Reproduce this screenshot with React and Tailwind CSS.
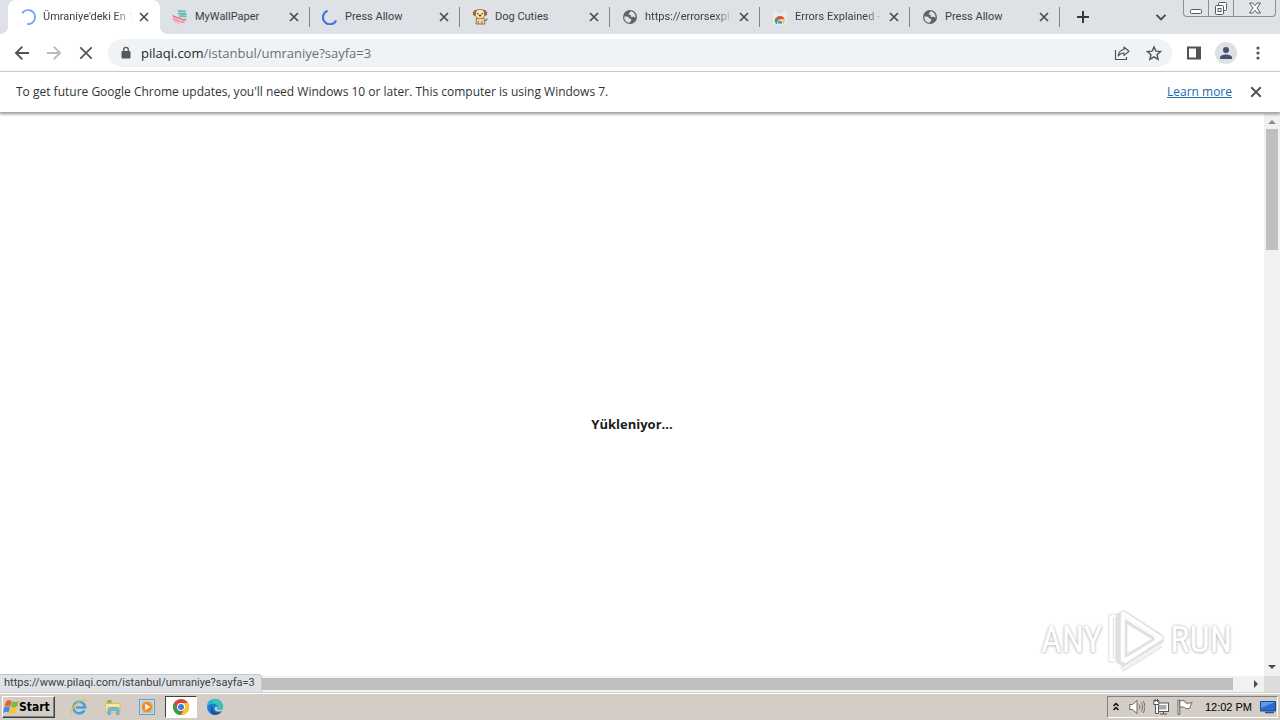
import React from "react";

function Spinner({ color = "#6f9ff0", strong = false }) {
  return (
    <svg viewBox="0 0 16 16" className="size-4 shrink-0" fill="none" aria-hidden="true">
      {strong ? (
        <path d="M5.6 1.7A7 7 0 1 0 14.2 11.5" stroke={color} strokeWidth="2.2" />
      ) : (
        <path d="M2.200 4.200A7 7 0 1 1 7.200 15" stroke={color} strokeWidth="1.800" />
      )}
    </svg>
  );
}

function WallpaperIcon() {
  return (
    <svg viewBox="0 0 16 16" className="size-4 shrink-0" fill="none" aria-hidden="true">
      <path d="M6 2.5c3-1.5 4 1 7.5-.7M6 5c3-1.5 5 1.200 8.500-.6M7.500 7.300c3-1 4 1 7-.4" stroke="#5fc0b8" strokeWidth="1.900" />
      <path d="M.8 6.500c2.500 3.500 6 1 8.500 3.500 1.500 1.300 3 1 5 .2" stroke="#f0697f" strokeWidth="1.500" />
      <path d="M1 9.500c2.500 2.700 5.500.8 7.500 3 1.200 1 2.500.8 4 .3" stroke="#f48a98" strokeWidth="1.500" />
      <path d="M2.500 12.500c2-.2 3.500.4 5 2.300" stroke="#f6a8b0" strokeWidth="1.400" />
    </svg>
  );
}

function DogIcon() {
  return (
    <svg viewBox="0 0 16 16" className="size-4 shrink-0" aria-hidden="true">
      <path d="M4.500 9h7.500l1 6H4z" fill="#f3dca8" stroke="#7d5a2e" strokeWidth=".8" />
      <path d="M4 1.500c2-1.300 6-1.300 8 0 1.500 1.500 1 5.500-.5 7-2 1.500-5 1.500-7 0C3 7 2.500 3 4 1.500z" fill="#fbe9bd" stroke="#8a6534" strokeWidth=".8" />
      <path d="M4.300 1.300C2 1.200.8 3 1.300 5.800l1.700.6zM11.700 1.300c2.300-.1 3.500 1.700 3 4.500l-1.700.6z" fill="#a9773c" stroke="#6d4a22" strokeWidth=".6" />
      <circle cx="6" cy="4.800" r=".8" fill="#3b2a1a" />
      <circle cx="10" cy="4.800" r=".8" fill="#3b2a1a" />
      <ellipse cx="8" cy="6.600" rx="1.300" ry=".9" fill="#3b2a1a" />
      <path d="M6.300 11.500V15M10 11.500V15" stroke="#7d5a2e" strokeWidth=".8" />
      <path d="M13 11.500c1.500 0 2-1 1.800-2" fill="none" stroke="#8a6534" strokeWidth="1.200" />
    </svg>
  );
}

function GlobeIcon() {
  return (
    <svg viewBox="0 0 16 16" className="size-4 shrink-0" aria-hidden="true">
      <circle cx="8" cy="8" r="7" fill="#5f6368" />
      <path d="M2.300 7.600c2.300-.4 4 .1 4.600 1.200.4.800 1.300.8 2 1.200.9.600.4 1.500-.3 2.200-.4.500-.7 1-.8 1.500C5 13.800 2.700 11.600 2.300 9.200z" fill="#dee1e6" />
      <path d="M8.800 2.300c-1 .8-.7 1.500-1.700 2-.9.500-.5 1.400.6 1.400 1 0 1.300.6 1 1.300-.3.900.9 1.300 1.800 1 .9-.4 2.200 0 2.800 1.300C14.200 6.300 12.300 2.900 8.800 2.300z" fill="#dee1e6" />
    </svg>
  );
}

function WebStoreIcon() {
  return (
    <svg viewBox="0 0 16 16" className="size-4 shrink-0" aria-hidden="true">
      <path d="M1 2h14v12a1 1 0 0 1-1 1H2a1 1 0 0 1-1-1z" fill="#e8eaee" />
      <path d="M5.500 2.800h5" stroke="#d0d3d8" strokeWidth="1" />
      <path d="M3.400 10A5 5 0 0 1 12.600 10L8 10.500z" fill="#df4a3e" />
      <path d="M3.400 9.200A5 5 0 0 0 4.300 15h2.500L8 11z" fill="#3da757" />
      <path d="M8.500 15h3.200a5 5 0 0 0 .9-5H8z" fill="#f9cd3b" />
      <path d="M5.600 15a2.600 2.600 0 1 1 4.800 0z" fill="#4a8af4" stroke="#fff" strokeWidth=".7" />
    </svg>
  );
}

function Cross({ className, width = 1.8 }) {
  return (
    <svg viewBox="0 0 10 10" className={className} fill="none" stroke="currentColor" strokeWidth={width} aria-hidden="true">
      <path d="M1 1l8 8M9 1L1 9" />
    </svg>
  );
}

const tabs = [
  { title: "Ümraniye'deki En 1", icon: <Spinner />, active: true, fade: true },
  { title: "MyWallPaper", icon: <WallpaperIcon /> },
  { title: "Press Allow", icon: <Spinner color="#3f76d8" strong /> },
  { title: "Dog Cuties", icon: <DogIcon /> },
  { title: "https://errorsexpl", icon: <GlobeIcon />, fade: true },
  { title: "Errors Explained -", icon: <WebStoreIcon />, fade: true },
  { title: "Press Allow", icon: <GlobeIcon /> },
];

function Tab({ tab }) {
  return (
    <div
      className={
        "relative flex h-full min-w-0 items-center pl-3 pr-[11px] " +
        (tab.active ? "w-[152px] rounded-t-lg bg-white" : "w-[150px]")
      }
    >
      {tab.active && (
        <>
          <span className="absolute bottom-0 -left-2 size-2 bg-[radial-gradient(circle_at_0_0,#dee1e6_8px,white_8px)]" />
          <span className="absolute bottom-0 -right-2 size-2 bg-[radial-gradient(circle_at_100%_0,#dee1e6_8px,white_8px)]" />
        </>
      )}
      {tab.icon}
      <button
        type="button"
        className={
          "ml-[7px] min-w-0 flex-1 overflow-hidden whitespace-nowrap text-left font-[Roboto,sans-serif] text-[11px] leading-4 text-[#3c4043] " +
          (tab.fade ? "mask-r-from-80%" : "")
        }
      >
        {tab.title}
      </button>
      <button type="button" aria-label={"Close " + tab.title} className="ml-1.5 text-[#45494d]">
        <Cross className="size-2.5" width={1.6} />
      </button>
      {!tab.active && <span className="absolute right-0 h-5 w-px bg-[#80848a]" />}
    </div>
  );
}

function TabStrip() {
  return (
    <header className="flex h-[34px] items-center bg-[#dee1e6] pl-2">
      <nav aria-label="Tabs" className="flex h-full min-w-0">
        {tabs.map((tab, i) => (
          <Tab key={i} tab={tab} />
        ))}
      </nav>
      <button type="button" aria-label="New tab" className="ml-4 text-[#35383c]">
        <svg viewBox="0 0 14 14" className="size-3.5" stroke="currentColor" strokeWidth="2" aria-hidden="true">
          <path d="M7 1v12M1 7h12" />
        </svg>
      </button>
      <div className="ml-auto flex h-full items-center">
        <button type="button" aria-label="Search tabs" className="mr-4 text-[#45494d]">
          <svg viewBox="0 0 12 12" className="size-3" fill="none" stroke="currentColor" strokeWidth="1.900" aria-hidden="true">
            <path d="M1.500 3.800L6 8.300l4.500-4.500" />
          </svg>
        </button>
        <div className="mr-1 flex h-[17px] self-start rounded-b-[4px] border border-t-0 border-[#8b8f96] bg-[#e0e3e8] text-[#555a62]">
          <button type="button" aria-label="Minimize" className="flex w-[25px] items-center justify-center border-r border-[#8b8f96]">
            <svg viewBox="0 0 14 14" className="size-3.5" aria-hidden="true">
              <rect x="1.500" y="8.500" width="11" height="4" rx="1" fill="#fff" stroke="currentColor" />
            </svg>
          </button>
          <button type="button" aria-label="Restore" className="flex w-[25px] items-center justify-center border-r border-[#8b8f96]">
            <svg viewBox="0 0 14 14" className="size-3.5" fill="#fff" stroke="currentColor" aria-hidden="true">
              <rect x="4.500" y="1.500" width="8" height="8" rx="1" />
              <rect x="1.500" y="4.500" width="8" height="9" rx="1" />
              <rect x="4" y="7.500" width="3" height="3" />
            </svg>
          </button>
          <button type="button" aria-label="Close window" className="flex w-[41px] items-center justify-center">
            <svg viewBox="0 0 14 14" className="size-3.5" fill="#fff" stroke="currentColor" aria-hidden="true">
              <path d="M1.500 2h3.300L7 4.700 9.200 2h3.300L9 7l3.500 5H9.200L7 9.300 4.800 12H1.500L5 7z" />
            </svg>
          </button>
        </div>
      </div>
    </header>
  );
}

function Toolbar() {
  return (
    <div className="flex h-[38px] items-center border-b border-[#d9dbde] bg-white px-3.5 text-[#505458]">
      <button type="button" aria-label="Back">
        <svg viewBox="0 0 16 16" className="size-4" fill="none" stroke="currentColor" strokeWidth="1.900" aria-hidden="true">
          <path d="M15 8H2.500M8.300 1.700L2 8l6.300 6.300" />
        </svg>
      </button>
      <button type="button" aria-label="Forward" className="ml-4 text-[#b9bbbe]">
        <svg viewBox="0 0 16 16" className="size-4" fill="none" stroke="currentColor" strokeWidth="1.900" aria-hidden="true">
          <path d="M1 8h12.500M7.700 1.700L14 8l-6.300 6.300" />
        </svg>
      </button>
      <button type="button" aria-label="Stop loading" className="ml-4">
        <svg viewBox="0 0 16 16" className="size-4" fill="none" stroke="currentColor" strokeWidth="1.700" aria-hidden="true">
          <path d="M2.300 2.300l11.400 11.400M13.700 2.300L2.300 13.700" />
        </svg>
      </button>
      <div className="ml-3.5 flex h-7 min-w-0 flex-1 items-center rounded-full bg-[#eff3f6] pl-3 pr-2.5">
        <svg viewBox="0 0 12 14" className="h-3.5 w-3 shrink-0" aria-hidden="true">
          <rect x="1.500" y="5" width="9" height="7.500" rx="1" fill="#54585d" />
          <path d="M3.700 5.500V3.700a2.300 2.300 0 0 1 4.600 0v1.800" fill="none" stroke="#54585d" strokeWidth="1.400" />
        </svg>
        <a href="#address" className="ml-[9px] min-w-0 flex-1 truncate text-[13px] leading-5 text-[#6b7075]">
          <span className="text-[#24272a]">pilaqi.com</span>/istanbul/umraniye?sayfa=3
        </a>
        <button type="button" aria-label="Share">
          <svg viewBox="0 0 16 16" className="size-4" fill="none" stroke="currentColor" strokeWidth="1.200" aria-hidden="true">
            <path d="M1.500 5v9.500h11V12" />
            <path d="M10 2l5 4.200-5 4.200V8C7.300 8 5.600 8.800 4.200 11c.3-3.300 2.300-6 5.800-6.500z" strokeLinejoin="round" />
          </svg>
        </button>
        <button type="button" aria-label="Bookmark" className="ml-4">
          <svg viewBox="0 0 16 16" className="size-4" fill="none" stroke="currentColor" strokeWidth="1.400" aria-hidden="true">
            <path d="M8 1.900l1.900 4.300 4.600.4-3.500 3.100 1.100 4.600L8 11.800l-4.100 2.500L5 9.700 1.500 6.600l4.600-.4z" />
          </svg>
        </button>
      </div>
      <div className="ml-3.5 flex items-center gap-[13px]">
        <button type="button" aria-label="Side panel">
          <svg viewBox="0 0 16 16" className="size-4" aria-hidden="true">
            <path d="M1 1.500h14v13H1zM3 3.500v9h7v-9z" fill="currentColor" fillRule="evenodd" />
          </svg>
        </button>
        <button type="button" aria-label="Profile" className="flex size-[22px] items-center justify-center rounded-full bg-[#dde0e5] text-[#47516b]">
          <svg viewBox="0 0 14 14" className="size-3.5" fill="currentColor" aria-hidden="true">
            <circle cx="7" cy="4" r="3" />
            <path d="M1 13v-1.500C1 9.300 4.500 8.400 7 8.400s6 .9 6 3.100V13z" />
          </svg>
        </button>
        <button type="button" aria-label="Menu">
          <svg viewBox="0 0 16 16" className="size-4" fill="currentColor" aria-hidden="true">
            <circle cx="8" cy="3" r="1.600" />
            <circle cx="8" cy="8" r="1.600" />
            <circle cx="8" cy="13" r="1.600" />
          </svg>
        </button>
      </div>
    </div>
  );
}

function InfoBar() {
  return (
    <div className="relative z-10 flex h-[41px] items-center border-b border-[#a9abad] bg-white px-4 text-xs text-[#303336] shadow-[0_1px_3px_#00000070]">
      <p className="min-w-0 flex-1 truncate">
        To get future Google Chrome updates, you'll need Windows 10 or later. This computer is using Windows 7.
      </p>
      <a href="#learn" className="text-[#2467b3] underline">
        Learn more
      </a>
      <button type="button" aria-label="Dismiss" className="ml-4 flex size-4 shrink-0 items-center justify-center text-[#505458]">
        <Cross className="size-3" width={1.6} />
      </button>
    </div>
  );
}

function Watermark() {
  const letters =
    "font-['Liberation_Sans_Narrow','Roboto_Condensed',Roboto,sans-serif] text-4xl leading-10 text-white [text-shadow:0_0_3px_#b8b8b8,0_1px_3px_#d0d0d0]";
  return (
    <div className="absolute right-8 bottom-1 flex items-center" aria-label="ANY RUN">
      <span className={letters}>ANY</span>
      <svg viewBox="0 0 64 64" className="mx-0.5 size-16" fill="none" strokeLinejoin="round" aria-hidden="true">
        <g stroke="#e0e0e0" strokeWidth="5.500">
          <path d="M11 52H7V8.500h5" />
          <path d="M20 5l37 24v4L20 56.500l-6-4V8z" />
          <path d="M21 14v33l27-16z" />
          <path d="M18 61.500L57 37" />
        </g>
        <g stroke="#fff" strokeWidth="3.500">
          <path d="M11 52H7V8.500h5" />
          <path d="M19 4v50" />
          <path d="M19 5l38 25L20 54" />
          <path d="M18 61.500L57 37" stroke="#f3f3f3" />
        </g>
        <path d="M23 16v30l25-15z" fill="#fff" stroke="#e8e8e8" />
      </svg>
      <span className={letters}>RUN</span>
    </div>
  );
}

function Arrow({ className = "", d }) {
  return (
    <svg viewBox="0 0 8 8" className={"size-2 " + className} fill="currentColor" aria-hidden="true">
      <path d={d} />
    </svg>
  );
}

function Viewport() {
  return (
    <div className="relative flex flex-1 flex-col">
      <div className="flex flex-1">
        <main className="relative flex flex-1 items-center justify-center bg-white pt-[58px]">
          <h1 className="text-[13px] leading-5 font-bold text-[#1b1b1b]">Yükleniyor...</h1>
          <Watermark />
        </main>
        <div className="flex w-4 flex-col items-center bg-[#f1f1f1]">
          <button type="button" aria-label="Scroll up" className="flex h-4 items-center pt-0.5 text-[#8d8d8d]">
            <Arrow d="M0 6l4-4 4 4z" />
          </button>
          <div className="h-[121px] w-3 bg-[#bfbfbf]" />
          <button type="button" aria-label="Scroll down" className="mt-auto flex h-[18px] items-center text-[#4b4b4b]">
            <Arrow d="M0 2l4 4 4-4z" />
          </button>
        </div>
      </div>
      <div className="flex h-4 items-center bg-[#f1f1f1]">
        <div className="h-3 flex-1 bg-[#bfbfbf]" />
        <div className="flex w-[31px] justify-end pr-1">
          <button type="button" aria-label="Scroll right">
            <Arrow className="text-[#4b4b4b]" d="M2 0l4 4-4 4z" />
          </button>
        </div>
        <div className="h-4 w-4 bg-[#dcdcdc]" />
      </div>
      <div className="absolute bottom-0 left-0 flex h-[18px] items-center rounded-tr border-t border-r border-[#c3c6ca] bg-[#dee1e6] pr-1.5 pl-1 font-[Roboto,sans-serif] text-[11px] text-[#3c4043]">
        https://www.pilaqi.com/istanbul/umraniye?sayfa=3
      </div>
    </div>
  );
}

function StartFlag() {
  return (
    <svg viewBox="0 0 16 16" className="size-4 shrink-0" aria-hidden="true">
      <path d="M2.900 2.900C4.800 1 6.500 1 8.600 2L7.100 7.600C5.500 6.500 3.500 6.500 1.300 8.100z" fill="#e8602c" />
      <path d="M9.200 2.300c2 1 4.200 1 6.500-.5L14.200 7.300c-2.200 1.600-4.400 1.600-6.500.4z" fill="#84b93c" />
      <path d="M1.200 8.800c2-1.500 3.900-1.500 5.700-.5L5.500 13.500C3.800 12.500 2 12.600 0 14z" fill="#4389d6" />
      <path d="M7.500 8.500c2.100 1.200 4.200 1.100 6.400-.3L12.500 13.700c-2.200 1.500-4.300 1.400-6.400.2z" fill="#f7c52e" />
    </svg>
  );
}

function IeIcon() {
  return (
    <svg viewBox="0 0 18 18" className="size-[18px]" fill="none" aria-hidden="true">
      <path d="M14.300 12.300A5.800 5.800 0 1 1 15 9.500H6" stroke="#41a3dc" strokeWidth="2.600" />
      <path d="M2.500 15.800C-1 15 3.500 7.500 9 3.800c4-2.600 7.500-3.300 7.500-.3" stroke="#f0be3c" strokeWidth="1.300" />
    </svg>
  );
}

function FolderIcon() {
  return (
    <svg viewBox="0 0 18 18" className="size-[18px]" aria-hidden="true">
      <path d="M2 3h5l1 1.500h7V14H2z" fill="#e9c45c" />
      <path d="M3.500 2h4v4h-4z" fill="#79b86b" />
      <path d="M1.500 5.500h14.500v8.500H1.500z" fill="#f9e7a0" stroke="#d9b64e" strokeWidth=".7" />
      <path d="M4 16.500V11a1.500 1.500 0 0 1 1.500-1.500h8A1.500 1.500 0 0 1 15 11v5.500h-2.500V12.500h-6v4z" fill="#75bbe0" stroke="#4d91bd" strokeWidth=".6" />
    </svg>
  );
}

function MediaIcon() {
  return (
    <svg viewBox="0 0 18 18" className="size-[18px]" aria-hidden="true">
      <rect x="1.500" y="1.500" width="15" height="15" fill="#c4dcf0" stroke="#6d9fc6" />
      <path d="M4 3h8l3 3v9H4z" fill="#a3c7e4" />
      <circle cx="9" cy="9" r="5.500" fill="#f38a1d" stroke="#fbc27b" strokeWidth=".7" />
      <path d="M7.200 5.800v6.400L12.300 9z" fill="#fff" />
    </svg>
  );
}

function ChromeIcon() {
  return (
    <svg viewBox="0 0 18 18" className="size-[18px]" aria-hidden="true">
      <circle cx="9" cy="9" r="8" fill="#e34133" />
      <path d="M2.100 5l3.400 6L9 13l-.1 4A8 8 0 0 1 2.100 5z" fill="#2fa04e" />
      <path d="M9 5h6.900A8 8 0 0 1 8.900 17l3.600-6z" fill="#fbc91d" />
      <circle cx="9" cy="9" r="4" fill="#fff" />
      <circle cx="9" cy="9" r="3" fill="#3a7ce9" />
    </svg>
  );
}

function EdgeIcon() {
  return (
    <svg viewBox="0 0 18 18" className="size-[18px]" aria-hidden="true">
      <circle cx="9" cy="9" r="8" fill="#1f7fce" />
      <path d="M1 9a8 8 0 0 1 16-.6c.2 2.600-1.900 3.700-4 3.700-1.900 0-2.400-.8-1.700-1.600C12.500 8.600 10.500 5.500 7 5.500 4 5.500 1.600 7 1 9z" fill="#3cc3b5" />
      <path d="M1 9a8 8 0 0 1 5-7.400C3.500 4 9 4.300 10 6.500 6 4.500 2 6 1 9z" fill="#2db1dc" />
      <path d="M7.300 8c-1.800 1.700-.8 6 4.200 6.200 2 0 3.200-.6 4.200-1.500C14 16 10 17.800 6.300 16.300 3.500 14 4.200 9.500 7.300 8z" fill="#1655a5" />
      <path d="M11.300 10.500c-.7.800-.2 1.600 1.700 1.600 1.500 0 2.900-.5 4-1.600-.2.900-.5 1.600-.9 2.200-3.300 2.100-7.900.3-7.400-2.500.3-1.200 1.400-1.800 2.600-1.200z" fill="#d4cdc5" />
    </svg>
  );
}

const launchers = [
  { name: "Internet Explorer", icon: <IeIcon /> },
  { name: "Windows Explorer", icon: <FolderIcon /> },
  { name: "Media Player", icon: <MediaIcon /> },
  { name: "Google Chrome", icon: <ChromeIcon />, active: true },
  { name: "Microsoft Edge", icon: <EdgeIcon /> },
];

function Taskbar() {
  return (
    <footer className="flex h-7 items-center border-t border-[#d4d0c8] bg-[#d4cdc5] px-0.5 pt-px shadow-[inset_0_1px_0_#fff]">
      <button
        type="button"
        className="flex h-[22px] items-center border border-t-white border-r-[#404040] border-b-[#404040] border-l-white bg-[#d4cdc5] pr-1 font-['DejaVu_Sans_Condensed',sans-serif] text-xs font-bold text-black shadow-[inset_-1px_-1px_0_#808080]"
      >
        <StartFlag />
        Start
      </button>
      <nav aria-label="Quick launch" className="ml-2 flex items-center gap-0.5">
        {launchers.map((item) => (
          <button
            key={item.name}
            type="button"
            aria-label={item.name}
            className={
              "flex h-[22px] w-8 items-center justify-center " +
              (item.active ? "border border-t-[#404040] border-r-white border-b-white border-l-[#404040] bg-white" : "")
            }
          >
            {item.icon}
          </button>
        ))}
      </nav>
      <div className="ml-auto flex h-[22px] items-center border border-t-[#808080] border-r-white border-b-white border-l-[#808080] pl-[3px] text-[#444]">
        <button type="button" aria-label="Show hidden icons">
          <svg viewBox="0 0 10 12" className="h-3 w-2.5" fill="none" stroke="#000" strokeWidth="1.400" aria-hidden="true">
            <path d="M2.500 5L5 2.500 7.500 5M2.500 9L5 6.500 7.500 9" />
          </svg>
        </button>
        <button type="button" aria-label="Volume" className="ml-2">
          <svg viewBox="0 0 16 16" className="size-4" fill="none" stroke="#666" aria-hidden="true">
            <path d="M.7 5.500h2.800L8 1.500v13L3.500 10.500H.7z" fill="#fff" />
            <path d="M10 5.500c1.200 1.500 1.200 3.500 0 5M12 3.500c2.200 2.500 2.200 6.500 0 9M14 2c2.500 4 2.500 8 0 12" />
          </svg>
        </button>
        <button type="button" aria-label="Network" className="ml-2">
          <svg viewBox="0 0 16 16" className="size-4" stroke="#555" aria-hidden="true">
            <rect x="4" y="4" width="11.500" height="8.500" fill="#fff" />
            <rect x="6" y="6" width="7.500" height="4.500" fill="#aaa" stroke="none" />
            <path d="M7 15h7M10.500 12.500V15" />
            <path d="M.8 1.500h5v4h-5zM2.500 5.500V14.500h3v-9z" fill="#fff" />
            <path d="M2 0v3M4.500 0v3" />
          </svg>
        </button>
        <button type="button" aria-label="Action center" className="ml-2">
          <svg viewBox="0 0 16 16" className="size-4" fill="#fff" stroke="#666" aria-hidden="true">
            <path d="M1 1h1.800v14.500H1z" />
            <path d="M2.800 2c2.200-.8 4-.5 5.500.6 0 .8 0 1 .2 1.200 2 .8 4 .7 6.700-.6-1 1.300-1.700 4.500-2.400 6-2 .8-4 .7-5.300-.7-1.500-.7-3-.8-4.700-.2z" />
          </svg>
        </button>
        <time className="ml-3 font-['Liberation_Sans',sans-serif] text-[11px] whitespace-nowrap text-black">12:02 PM</time>
        <button type="button" aria-label="Show desktop" className="mr-px ml-2">
          <svg viewBox="0 0 16 14" className="h-3.5 w-4" aria-hidden="true">
            <path d="M.5 1.500h15v9.500H.5z" fill="#2a6ccc" stroke="#174a92" />
            <path d="M1 2h14L1 8z" fill="#5b9be8" />
            <path d="M5 12.500h9" stroke="#27548f" strokeWidth="1.500" />
          </svg>
        </button>
      </div>
    </footer>
  );
}

export default function App() {
  return (
    <div className="flex min-h-screen flex-col bg-white font-['Open_Sans','Noto_Sans',sans-serif]">
      <TabStrip />
      <Toolbar />
      <InfoBar />
      <Viewport />
      <Taskbar />
    </div>
  );
}
